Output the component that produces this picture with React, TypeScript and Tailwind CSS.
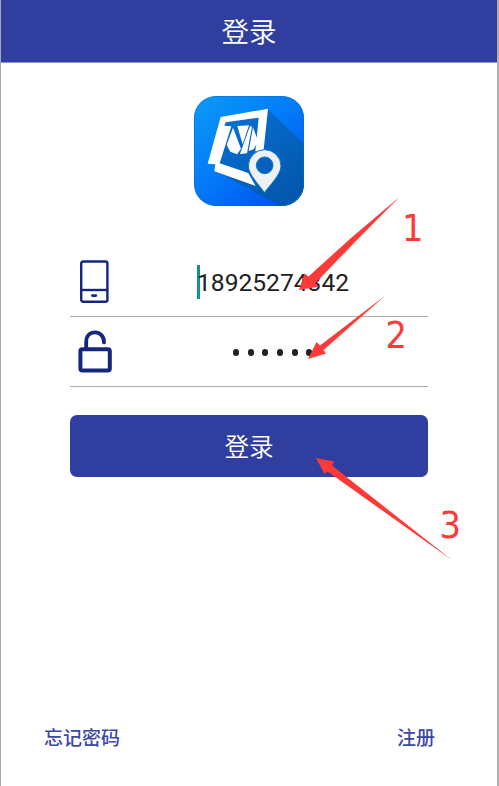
import React from "react";

function Logo() {
  return (
    <svg className="block h-[110px] w-[110px]" viewBox="30 28 330 330">
      <defs>
        <linearGradient id="tile" x1="0" y1="0" x2="0.85" y2="1">
          <stop offset="0" stopColor="#0b9bf8" />
          <stop offset="0.5" stopColor="#037bf8" />
          <stop offset="1" stopColor="#004ff0" />
        </linearGradient>
        <linearGradient id="shade" x1="0" y1="0" x2="0.7" y2="1">
          <stop offset="0" stopColor="#0872d8" />
          <stop offset="1" stopColor="#0358ab" />
        </linearGradient>
        <clipPath id="round">
          <rect x="30" y="28" width="330" height="330" rx="66" />
        </clipPath>
      </defs>
      <g clipPath="url(#round)">
        <rect x="30" y="28" width="330" height="330" fill="url(#tile)" />
        <path d="M251 67 L360 172 V358 H290 L96 254 L118 105 Z" fill="url(#shade)" />
        <rect x="31" y="29" width="328" height="328" rx="65" fill="none" stroke="#0869cf" strokeWidth="3" opacity="0.6" />
      </g>
      <path
        fill="#fff"
        d="M110 91 L252 66 L238 198 L214 194 L224 93 L125 107 L121 117 L142 119 L107 230 L193 259 L215 298 L91 254 L94 233 L71 231 Z"
      />
      <path fill="#fff" d="M147 123 L171 186 L159 203 L139 195 L128 175 Z" />
      <path fill="#fff" d="M160 118 L195 116 L176 173 Z" />
      <path fill="#fff" d="M198 118 L204 120 L189 200 L168 202 Z" />
      <path fill="#fff" d="M207 122 L222 163 L209 188 L194 193 Z" />
      <path
        fill="#edf1f2"
        stroke="#0871dc"
        strokeWidth="3"
        fillRule="evenodd"
        d="M241 318 C227 296 193 264 193 238 A49 49 0 0 1 291 238 C291 264 257 296 241 318 Z M242 211 A25 25 0 1 0 242 261 A25 25 0 1 0 242 211 Z"
      />
    </svg>
  );
}

function PhoneIcon() {
  return (
    <svg className="h-[44px] w-[34px]" viewBox="0 0 34 44" fill="none" stroke="#15267f">
      <rect x="4.2" y="1.5" width="26.2" height="40.2" rx="2" strokeWidth="2.4" />
      <path d="M4 30h27" strokeWidth="2.4" />
      <path d="M15.3 35.6h3.600" strokeWidth="2.6" strokeLinecap="round" />
    </svg>
  );
}

function LockIcon() {
  return (
    <svg className="h-[44px] w-[36px]" viewBox="0 0 36 44" fill="none" stroke="#15267f">
      <rect x="3.4" y="19.2" width="29.4" height="21.4" rx="2" strokeWidth="4" />
      <path d="M9.2 18.500V12C9.2 5.500 13 2.400 18 2.400c5.200 0 9 4 9 10" strokeWidth="3.800" strokeLinecap="round" />
    </svg>
  );
}

export default function App() {
  return (
    <div className="relative flex h-[786px] w-[499px] flex-col overflow-hidden border-r-2 border-l border-l-[#a9a9a9] border-r-[#b0b0b0] bg-white font-['Noto_Sans_CJK_SC',sans-serif]">
      <header className="flex h-[63px] shrink-0 items-center justify-center border-b border-[#8d95cc] bg-[#303f9f] pb-px">
        <h1 className="text-[27.5px] leading-none font-[350] text-white">登录</h1>
      </header>

      <main className="flex flex-1 flex-col px-[69px] pt-[32.500px]">
        <div className="flex justify-center">
          <Logo />
        </div>

        <div className="mt-[41.500px] flex h-[70px] items-center border-b border-[#a9a9a9]">
          <div className="ml-[7px] w-[120px]">
            <PhoneIcon />
          </div>
          <div className="flex items-center">
            <span className="h-[34px] w-[3px] bg-[#0f9688]" />
            <span className="mt-[3px] -ml-[3px] font-['Roboto',sans-serif] text-[24.6px] leading-none text-[#212121]">18925274342</span>
          </div>
        </div>

        <div className="flex h-[70px] items-center border-b border-[#a9a9a9]">
          <div className="ml-[7px] w-[156px]">
            <LockIcon />
          </div>
          <div className="mt-[2px] flex gap-[8.700px]">
            {[0, 1, 2, 3, 4, 5].map((i) => (
              <span key={i} className="h-[6.600px] w-[6px] rounded-full bg-[#212121]" />
            ))}
          </div>
        </div>

        <button className="mt-[27.500px] flex h-[62px] shrink-0 items-center justify-center rounded-[7px] bg-[#303f9f] text-[24.600px] leading-none font-[350] text-white">
          登录
        </button>
      </main>

      <footer className="flex justify-between pr-[62px] pb-[39px] pl-[43px] text-[19px] leading-[20px] font-medium text-[#3a48a4]">
        <a>忘记密码</a>
        <a>注册</a>
      </footer>

      <svg className="pointer-events-none absolute top-0 -left-px h-[786px] w-[499px]" viewBox="0 0 499 786" fill="#fd3a38">
        <path d="M399.500 197 L354 243 L315.500 283 L319 286.500 L299 290 L304.500 273.500 L308.500 276.500 L351 238 Z" />
        <path d="M386 295 L323.500 350 L326 353.500 L308 359 L316.500 342 L320 345.500 Z" />
        <path d="M452.500 560.500 L327.500 471.500 L324.500 474 L316 458 L334 461.500 L332 465.500 Z" />
        <g fontFamily="'DejaVu Sans Condensed','DejaVu Sans',sans-serif" fontStretch="condensed" fontSize="37.500">
          <text x="402" y="241">1</text>
          <text x="385.500" y="348">2</text>
          <text x="439.500" y="538">3</text>
        </g>
      </svg>
    </div>
  );
}
